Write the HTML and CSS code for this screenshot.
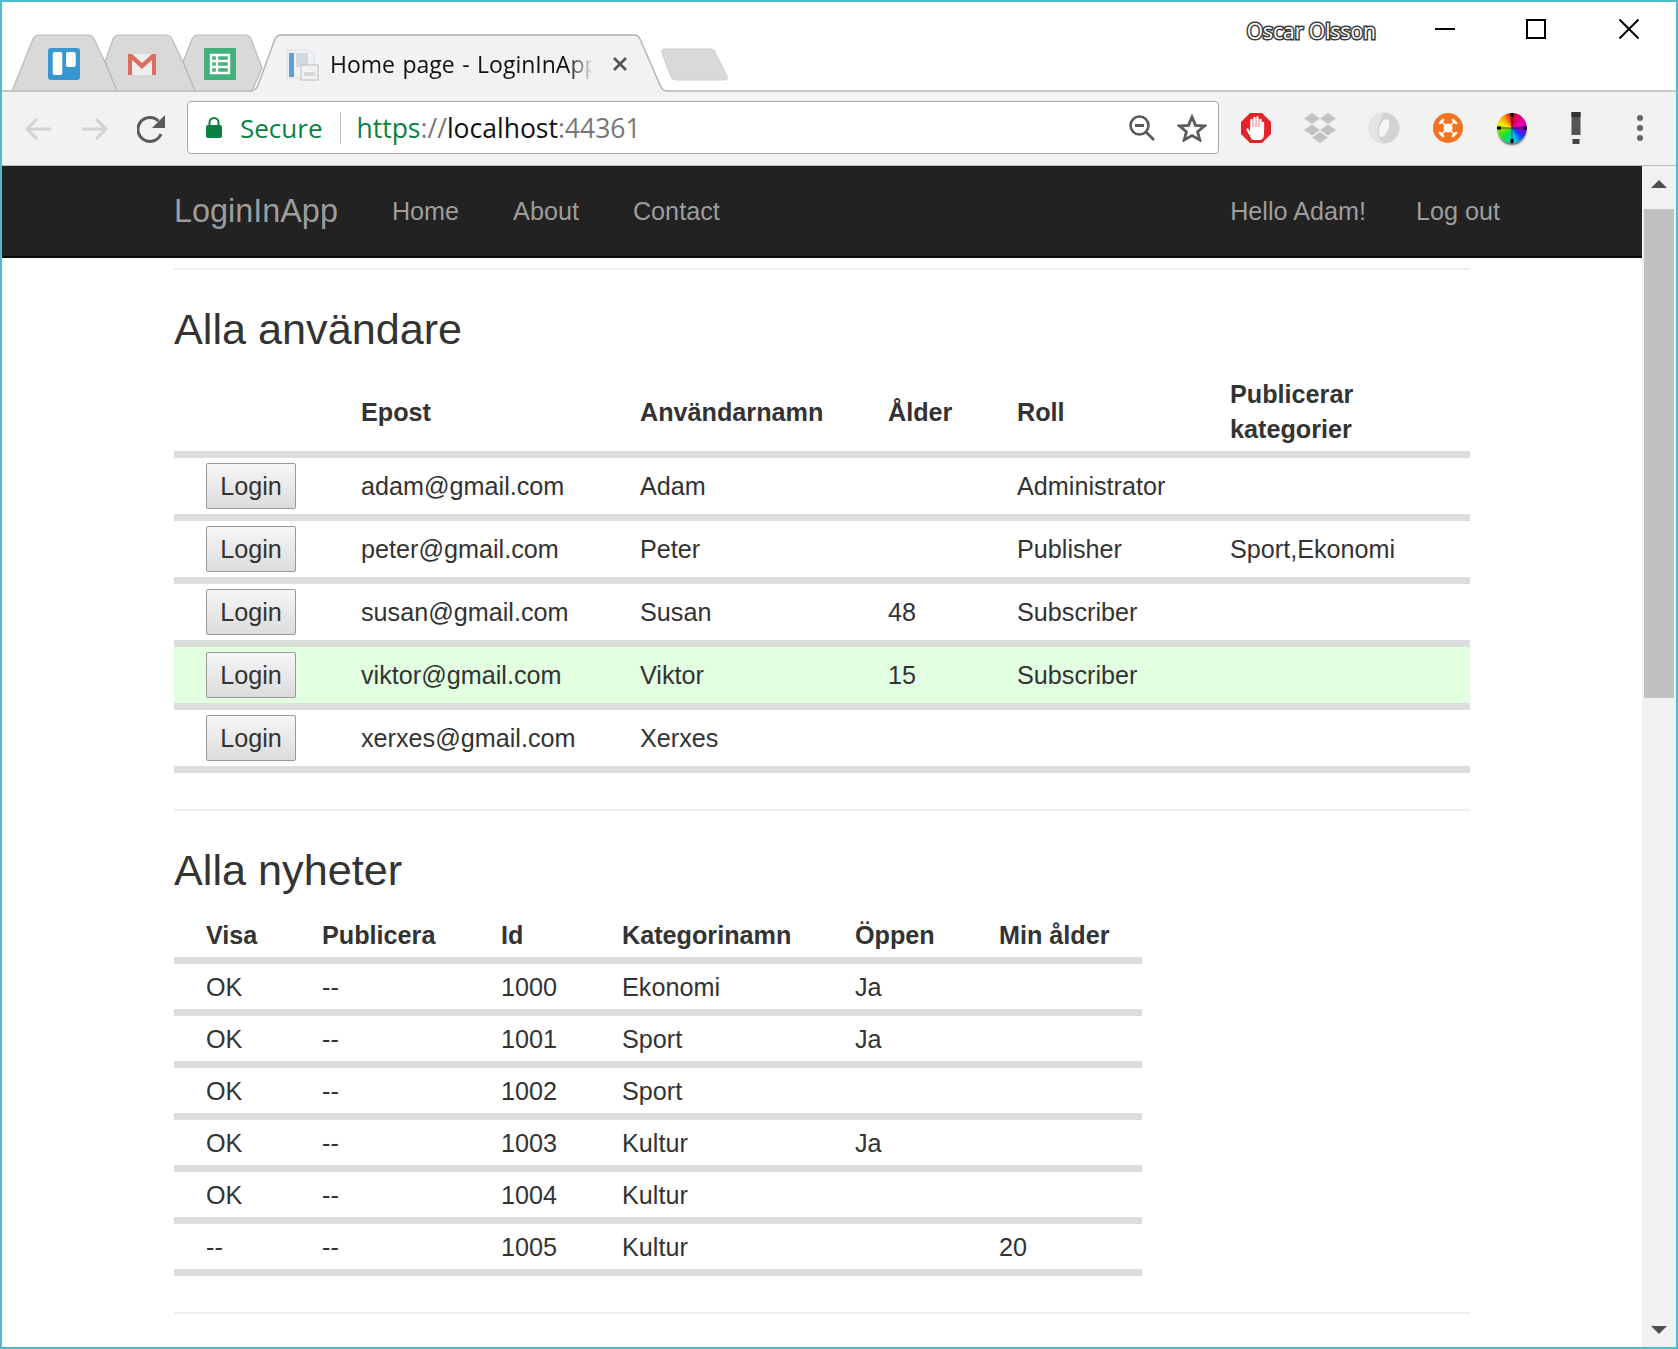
FILE: index.html
```html
<!DOCTYPE html>
<html lang="en">
<head>
  <meta charset="UTF-8">
  <title>Home page - LoginInApp</title>
  <link rel="stylesheet" href="styles.css">
</head>
<body>
<div class="window">

  <!-- Tab strip -->
  <div class="tabstrip">
    <svg class="tab-shapes" width="1674" height="90" viewBox="2 2 1674 90">
      <path class="base-line" d="M2 91H252M664 91H1676"/>
      <path class="tab-bg" d="M183 62L192 39Q194 35 198 35H245Q249 35 251 39L262 68L252 91H195Z"/>
      <path class="tab-bg" d="M105 62L113 39Q115 35 119 35H166Q170 35 172 39L183 62L195 91H117Z"/>
      <path class="tab-bg" d="M12 91L33 39Q35 35 39 35H88Q92 35 94 39L105 62L117 91Z"/>
      <path class="tab-active" d="M250 92Q256 91 258 85L275 39Q277 35 281 35H634Q638 35 640 39L660 85Q662 91 668 91V92Z"/>
      <path class="tab-active-line" d="M250 91Q256 91 258 85L275 39Q277 35 281 35H634Q638 35 640 39L660 85Q662 91 668 91"/>
      <path class="new-tab" d="M662 53Q661 49 665 49H711Q714 49 715 52L727 76Q729 80 725 80H676Q672 80 671 77Z"/>

      <!-- trello -->
      <rect x="48" y="48" width="32" height="32" rx="3" fill="#3797ce"/>
      <rect x="52.7" y="52" width="9.6" height="23" rx="2" fill="#fff"/>
      <rect x="66" y="52" width="9.7" height="15" rx="2" fill="#fff"/>
      <!-- gmail -->
      <path d="M128 54H156V75H128Z" fill="#eee"/>
      <path d="M128 75V54H132L142 63L152 54H156V75H152V60L142 69L132 60V75Z" fill="#db6d5f"/>
      <!-- sheets -->
      <rect x="204" y="48" width="32" height="32" rx="1" fill="#43b27c"/>
      <path d="M211 55H229V73H211ZM211 61H229M211 67H229M217 55V73" fill="none" stroke="#fff" stroke-width="2.4"/>
      <!-- page favicon -->
      <path d="M287 50H308L314 55V78H287Z" fill="#eef2f6" stroke="#d8dde3"/>
      <rect x="289" y="53" width="5" height="24" fill="#5ba0d8"/>
      <rect x="296" y="53" width="12" height="14" fill="#d5d8dc"/>
      <rect x="301" y="65" width="17" height="15" fill="#f2f2f2" stroke="#bcbcbc"/>
      <rect x="304" y="72" width="11" height="4" fill="#d8d8d8"/>
    </svg>

    <div class="tab-title">Home page - LoginInApp</div>
    <svg class="tab-close" width="14" height="14" viewBox="0 0 14 14"><path d="M1 1L13 13M13 1L1 13"/></svg>

    <div class="user-name">Oscar Olsson</div>
    <svg class="win-btn win-min" width="20" height="20" viewBox="0 0 20 20"><path d="M0 10H20"/></svg>
    <svg class="win-btn win-max" width="20" height="20" viewBox="0 0 20 20"><path d="M1 1H19V19H1Z"/></svg>
    <svg class="win-btn win-close" width="20" height="20" viewBox="0 0 20 20"><path d="M0.5 0.5L19.5 19.5M19.5 0.5L0.5 19.5"/></svg>
  </div>

  <!-- Address bar -->
  <div class="toolbar">
    <svg class="nav-arrow" width="28" height="24" viewBox="0 0 28 24"><path d="M27 12H3M13 2L3 12L13 22"/></svg>
    <svg class="nav-arrow nav-forward" width="28" height="24" viewBox="0 0 28 24"><path d="M1 12H25M15 2L25 12L15 22"/></svg>
    <svg class="nav-reload" width="28" height="28" viewBox="0 0 28 28">
      <path d="M24 19A12 12 0 1 1 21.500 6" fill="none" stroke="#5a5a5a" stroke-width="3"/>
      <path d="M28 0V13H15Z" fill="#5a5a5a"/>
    </svg>

    <div class="omnibox">
      <svg class="lock" width="16" height="21" viewBox="0 0 16 21">
        <path d="M3.500 10V5.500A4.500 4.500 0 0 1 12.500 5.500V10" fill="none" stroke="#0b8043" stroke-width="2"/>
        <rect x="0" y="8" width="16" height="13" rx="2" fill="#0b8043"/>
      </svg>
      <span class="secure">Secure</span>
      <span class="omni-sep"></span>
      <span class="url"><span class="url-green">https</span><span class="url-grey">://</span><span class="url-host">localhost</span><span class="url-grey">:44361</span></span>
      <svg class="omni-zoom" width="26" height="26" viewBox="0 0 26 26">
        <circle cx="10.500" cy="10.500" r="9" fill="none" stroke="#5a5a5a" stroke-width="2.600"/>
        <path d="M6 10.500H15M17 17L25 25" fill="none" stroke="#5a5a5a" stroke-width="2.800"/>
      </svg>
      <svg class="omni-star" width="30" height="28" viewBox="0 0 30 28">
        <path d="M15 3L18.500 11.300L27.500 12L20.600 17.800L22.800 26L15 21.500L7.200 26L9.400 17.800L2.500 12L11.500 11.300Z" fill="none" stroke="#5a5a5a" stroke-width="2.800"/>
      </svg>
    </div>

    <div class="extensions">
      <div class="ext">
        <svg width="30" height="30" viewBox="0 0 30 30">
          <path d="M9 0H21L30 9V21L21 30H9L0 21V9Z" fill="#e3222a"/>
          <path d="M10.500 15V7M13.500 15V5M16.500 15V4.500M19.500 15V7M22 17V10M9 21L6.500 16.500" fill="none" stroke="#fff" stroke-width="2.400" stroke-linecap="round"/>
          <path d="M9 14H23V21Q23 27 18 27H13Q10 27 9 23Z" fill="#fff"/>
        </svg>
      </div>
      <div class="ext">
        <svg width="32" height="30" viewBox="0 0 32 30" fill="#c2c2c2">
          <path d="M8 0L16 5.500L8 11L0 5.500Z"/>
          <path d="M24 0L32 5.500L24 11L16 5.500Z"/>
          <path d="M8 11.500L16 17L8 22.500L0 17Z"/>
          <path d="M24 11.500L32 17L24 22.500L16 17Z"/>
          <path d="M16 19L24 24.500L16 30L8 24.500Z"/>
        </svg>
      </div>
      <div class="ext">
        <svg width="32" height="32" viewBox="0 0 32 32">
          <circle cx="16" cy="16" r="15.500" fill="#d2d2d2"/>
          <path d="M16 0.500A15.500 15.500 0 0 0 16 31.500Q7 24 10 15Q12 8 16 0.500Z" fill="#e4e4e4"/>
          <ellipse cx="16" cy="16" rx="4.500" ry="9.500" transform="rotate(20 16 16)" fill="#f4f4f4"/>
        </svg>
      </div>
      <div class="ext">
        <svg width="30" height="30" viewBox="0 0 30 30">
          <circle cx="15" cy="15" r="15" fill="#f47321"/>
          <circle cx="15" cy="15" r="4.500" fill="#fff"/>
          <path d="M9 9L21 21M21 9L9 21" stroke="#fff" stroke-width="1.500"/>
          <path d="M6.200 10.800L10.800 6.200M19.200 6.200L23.800 10.800M6.200 19.200L10.800 23.800M19.200 23.800L23.800 19.200" stroke="#fff" stroke-width="2.400"/>
        </svg>
      </div>
      <div class="ext">
        <div class="wheel">
          <svg width="30" height="30" viewBox="0 0 30 30">
            <path d="M15 1V29M1 15H29" stroke="#222" stroke-width="0.800"/>
            <path d="M15 0V4M15 26V30M0 15H4M26 15H30" stroke="#000" stroke-width="3"/>
          </svg>
        </div>
      </div>
      <div class="ext">
        <svg width="10" height="32" viewBox="0 0 10 32">
          <rect x="0.500" y="0" width="9" height="23" fill="#555"/>
          <rect x="0.500" y="0" width="9" height="5" fill="#333"/>
          <rect x="1.500" y="27" width="7" height="5" fill="#444"/>
        </svg>
      </div>
      <div class="ext">
        <svg width="6" height="26" viewBox="0 0 6 26" fill="#666">
          <circle cx="3" cy="3" r="3"/><circle cx="3" cy="13" r="3"/><circle cx="3" cy="23" r="3"/>
        </svg>
      </div>
    </div>
  </div>

  <!-- Page -->
  <div class="viewport">
    <div class="page">
      <nav class="navbar">
        <a class="brand" href="#">LoginInApp</a>
        <a class="nav-link" href="#">Home</a>
        <a class="nav-link" href="#">About</a>
        <a class="nav-link" href="#">Contact</a>
        <a class="nav-link nav-right" href="#">Hello Adam!</a>
        <a class="nav-link" href="#">Log out</a>
      </nav>

      <div class="container">
        <hr class="top-rule">
        <h2>Alla användare</h2>
        <table class="users">
          <colgroup>
            <col class="u1"><col class="u2"><col class="u3"><col class="u4"><col class="u5"><col class="u6">
          </colgroup>
          <thead>
            <tr>
              <th></th>
              <th>Epost</th>
              <th>Användarnamn</th>
              <th>Ålder</th>
              <th>Roll</th>
              <th>Publicerar kategorier</th>
            </tr>
          </thead>
          <tbody>
            <tr>
              <td class="btn-cell"><button class="login-btn">Login</button></td>
              <td>adam@gmail.com</td><td>Adam</td><td></td><td>Administrator</td><td></td>
            </tr>
            <tr>
              <td class="btn-cell"><button class="login-btn">Login</button></td>
              <td>peter@gmail.com</td><td>Peter</td><td></td><td>Publisher</td><td>Sport,Ekonomi</td>
            </tr>
            <tr>
              <td class="btn-cell"><button class="login-btn">Login</button></td>
              <td>susan@gmail.com</td><td>Susan</td><td>48</td><td>Subscriber</td><td></td>
            </tr>
            <tr class="current">
              <td class="btn-cell"><button class="login-btn">Login</button></td>
              <td>viktor@gmail.com</td><td>Viktor</td><td>15</td><td>Subscriber</td><td></td>
            </tr>
            <tr>
              <td class="btn-cell"><button class="login-btn">Login</button></td>
              <td>xerxes@gmail.com</td><td>Xerxes</td><td></td><td></td><td></td>
            </tr>
          </tbody>
        </table>

        <hr>
        <h2>Alla nyheter</h2>
        <table class="news">
          <colgroup>
            <col class="n1"><col class="n2"><col class="n3"><col class="n4"><col class="n5"><col class="n6">
          </colgroup>
          <thead>
            <tr>
              <th class="first">Visa</th><th>Publicera</th><th>Id</th><th>Kategorinamn</th><th>Öppen</th><th>Min ålder</th>
            </tr>
          </thead>
          <tbody>
            <tr><td class="first">OK</td><td>--</td><td>1000</td><td>Ekonomi</td><td>Ja</td><td></td></tr>
            <tr><td class="first">OK</td><td>--</td><td>1001</td><td>Sport</td><td>Ja</td><td></td></tr>
            <tr><td class="first">OK</td><td>--</td><td>1002</td><td>Sport</td><td></td><td></td></tr>
            <tr><td class="first">OK</td><td>--</td><td>1003</td><td>Kultur</td><td>Ja</td><td></td></tr>
            <tr><td class="first">OK</td><td>--</td><td>1004</td><td>Kultur</td><td></td><td></td></tr>
            <tr><td class="first">--</td><td>--</td><td>1005</td><td>Kultur</td><td></td><td>20</td></tr>
          </tbody>
        </table>
        <hr>
      </div>
    </div>

    <div class="scrollbar">
      <div class="scroll-up"><svg width="16" height="8" viewBox="0 0 16 8"><path d="M8 0L16 8H0Z"/></svg></div>
      <div class="scroll-thumb"></div>
      <div class="scroll-down"><svg width="16" height="8" viewBox="0 0 16 8"><path d="M0 0H16L8 8Z"/></svg></div>
    </div>
  </div>
</div>
</body>
</html>
```

FILE: styles.css
```css
html, body {
  margin: 0;
  padding: 0;
  background: #fff;
}
body {
  font-family: "Liberation Sans", Arial, sans-serif;
  font-size: 25.2px;
  color: #333;
}
.window {
  box-sizing: border-box;
  width: 1678px;
  height: 1349px;
  border: 2px solid #50bbcc;
  overflow: hidden;
  display: flex;
  flex-direction: column;
}

/* tab strip */
.tabstrip {
  position: relative;
  z-index: 0;
  display: flex;
  align-items: flex-start;
  height: 90px;
  flex: none;
}
.tab-shapes {
  position: absolute;
  left: 0;
  top: 0;
  z-index: -1;
}
.base-line {
  fill: none;
  stroke: #b5b5b5;
  stroke-width: 1.5;
}
.tab-bg {
  fill: #d9d9d9;
  stroke: #b9b9b9;
  stroke-width: 1.2;
}
.tab-active {
  fill: #f2f2f2;
}
.tab-active-line {
  fill: none;
  stroke: #b0b0b0;
  stroke-width: 1.4;
}
.new-tab {
  fill: #d9d9d9;
  stroke: #cfcfcf;
}
.tab-title {
  width: 264px;
  margin: 44px 0 0 328px;
  font-family: "Open Sans", sans-serif;
  font-size: 23px;
  word-spacing: 1.5px;
  line-height: 36px;
  color: #111;
  white-space: nowrap;
  overflow: hidden;
  -webkit-mask-image: linear-gradient(to right, #000 90%, transparent);
  mask-image: linear-gradient(to right, #000 90%, transparent);
}
.tab-close {
  margin: 55px 0 0 19px;
  fill: none;
  stroke: #555;
  stroke-width: 2.6;
}
.user-name {
  margin: 14px 59px 0 auto;
  font-family: "Open Sans", sans-serif;
  font-size: 21px;
  line-height: 30px;
  color: #fff;
  -webkit-text-stroke: 3px #3a3a3a;
  paint-order: stroke fill;
}
.win-btn {
  flex: none;
  margin-top: 17px;
  fill: none;
  stroke: #000;
  stroke-width: 2;
}
.win-max {
  margin-left: 71px;
}
.win-close {
  margin: 17px 37px 0 73px;
}

/* address bar */
.toolbar {
  flex: none;
  display: flex;
  align-items: center;
  height: 73px;
  padding-left: 22px;
  background: #f2f2f2;
  border-bottom: 1px solid #bdbdbd;
}
.nav-arrow {
  flex: none;
  fill: none;
  stroke: #d2d2d2;
  stroke-width: 3;
}
.nav-forward {
  margin-left: 29px;
}
.nav-reload {
  flex: none;
  margin-left: 28px;
}
.omnibox {
  box-sizing: border-box;
  flex: none;
  display: flex;
  align-items: center;
  width: 1032px;
  height: 53px;
  margin: 0 0 2px 22px;
  padding: 0 11px 0 18px;
  background: #fff;
  border: 1px solid #a9a9a9;
  border-radius: 4px;
  font-family: "Open Sans", sans-serif;
  font-size: 26px;
}
.lock {
  flex: none;
}
.secure {
  margin-left: 18px;
  color: #0b8043;
}
.omni-sep {
  width: 1px;
  height: 32px;
  margin: 0 15px 0 18px;
  background: #bdbdbd;
}
.url {
  font-size: 26.5px;
  white-space: nowrap;
}
.url-green {
  color: #0b8043;
}
.url-grey {
  color: #777;
}
.url-host {
  color: #111;
}
.omni-zoom {
  flex: none;
  margin-left: auto;
}
.omni-star {
  flex: none;
  margin-left: 22px;
}
.extensions {
  display: flex;
  gap: 32px;
  margin-left: 21px;
}
.ext {
  display: flex;
  align-items: center;
  justify-content: center;
  width: 32px;
  height: 32px;
  margin-bottom: 2px;
}
.wheel {
  width: 30px;
  height: 30px;
  border-radius: 50%;
  background: conic-gradient(#e00020, #e000c0 70deg, #8000e0 100deg, #1040f0 130deg, #00d0f0 170deg, #00e060 210deg, #60e000 250deg, #f0f000 290deg, #ff8000 330deg, #e00020);
  box-shadow: 0 3px 2px -1px #666;
}
.wheel svg {
  display: block;
}

/* page */
.viewport {
  flex: 1;
  display: flex;
  min-height: 0;
}
.page {
  flex: 1;
  min-width: 0;
  overflow: hidden;
}
.navbar {
  box-sizing: border-box;
  display: flex;
  align-items: center;
  height: 92px;
  padding: 0 142px 0 172px;
  background: #222;
  border-bottom: 2px solid #080808;
}
.navbar a {
  color: #9d9d9d;
  text-decoration: none;
  white-space: nowrap;
}
.brand {
  font-size: 32.4px;
  margin-right: 54px;
}
.nav-link {
  margin-right: 54px;
}
.nav-link:last-child {
  margin-right: 0;
}
.nav-right {
  margin-left: auto;
  margin-right: 50px;
}
.container {
  width: 1296px;
  margin-left: 172px;
}
hr {
  height: 2px;
  margin: 36px 0 0;
  border: 0;
  background: #eee;
}
hr.top-rule {
  margin-top: 10px;
}
h2 {
  margin: 35px 0 20px;
  font-size: 43.2px;
  font-weight: 400;
  line-height: 48px;
  color: #333;
}
table {
  table-layout: fixed;
  border-collapse: separate;
  border-spacing: 0;
}
th {
  padding: 4px 0;
  text-align: left;
  line-height: 35px;
  font-weight: 700;
  border-bottom: 7px solid #ddd;
}
td {
  height: 56px;
  padding: 0;
  line-height: 36px;
  border-bottom: 7px solid #ddd;
}
.users {
  width: 1296px;
}
.u1 { width: 187px; }
.u2 { width: 279px; }
.u3 { width: 248px; }
.u4 { width: 129px; }
.u5 { width: 213px; }
.u6 { width: 240px; }
.btn-cell {
  padding-left: 32px;
}
.login-btn {
  display: block;
  box-sizing: border-box;
  width: 90px;
  height: 46px;
  padding: 0;
  font-family: "Liberation Sans", Arial, sans-serif;
  font-size: 25.2px;
  color: #333;
  background: linear-gradient(#f6f6f6, #dcdcdc);
  border: 1.5px solid #999;
  border-radius: 2px;
}
.current td {
  background: #e2ffe2;
}
.news {
  width: 968px;
}
.news td {
  height: 45px;
}
.first {
  padding-left: 32px;
}
.n1 { width: 148px; }
.n2 { width: 179px; }
.n3 { width: 121px; }
.n4 { width: 233px; }
.n5 { width: 144px; }
.n6 { width: 143px; }

/* scrollbar */
.scrollbar {
  flex: none;
  display: flex;
  flex-direction: column;
  align-items: center;
  width: 34px;
  background: #f1f1f1;
}
.scrollbar svg {
  display: block;
  fill: #505050;
}
.scroll-up {
  height: 29px;
  padding-top: 14px;
}
.scroll-thumb {
  width: 30px;
  height: 489px;
  background: #c1c1c1;
}
.scroll-down {
  margin-top: auto;
  padding-bottom: 13px;
}
```
